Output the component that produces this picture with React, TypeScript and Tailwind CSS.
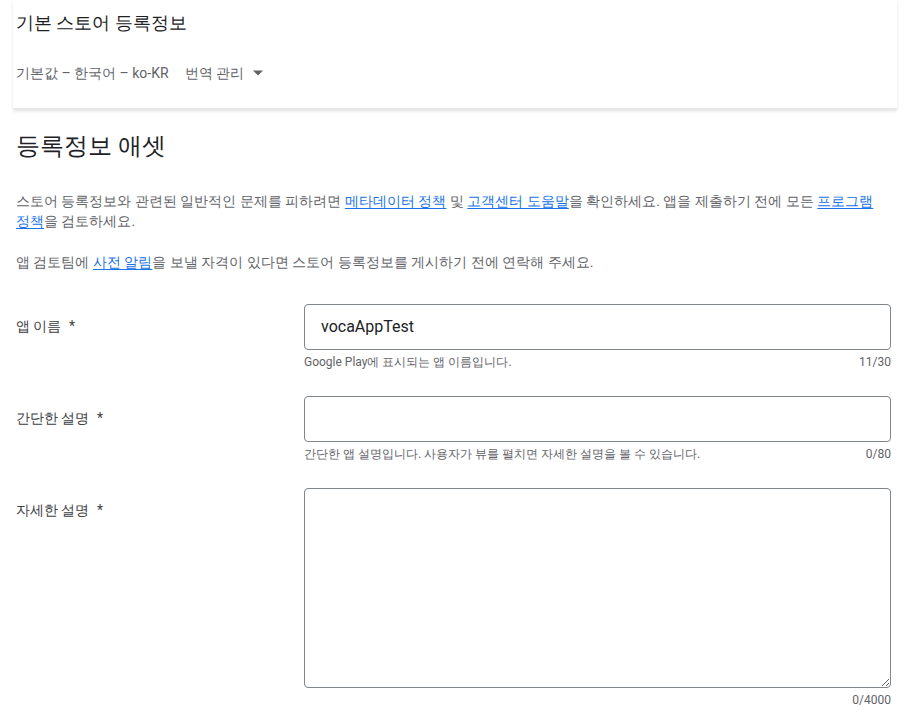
import { ReactNode } from 'react'

function Link({ children }: { children: ReactNode }) {
  return <a className="text-[#1a73e8] underline underline-offset-2">{children}</a>
}

function Field({
  label,
  hint,
  count,
  value,
  tall,
}: {
  label: string
  hint?: string
  count: string
  value?: string
  tall?: boolean
}) {
  return (
    <div className="flex">
      <div className="w-[288px] shrink-0 pt-[12px] text-[14px] leading-[20px] text-[#3c4043]">
        {label} <span className="ml-1">*</span>
      </div>
      <div className="w-[587px]">
        {tall ? (
          <textarea
            className="block w-full h-[200px] rounded-[4px] border border-[#80868b] px-4 py-3 text-[16px] outline-none"
            defaultValue=""
          />
        ) : (
          <div className="h-[46px] rounded-[4px] border border-[#80868b] px-4 flex items-center text-[16px] text-[#202124]">
            {value}
          </div>
        )}
        <div className="flex justify-between mt-[4px] text-[12px] leading-[16px] text-[#5f6368]">
          <span>{hint}</span>
          <span>{count}</span>
        </div>
      </div>
    </div>
  )
}

export default function App() {
  return (
    <div className="bg-white w-[910px] h-[723px] overflow-hidden font-[Roboto,sans-serif]">
      <div className="mx-[13px] shadow-[0_2px_3px_rgba(0,0,0,0.12)] border-b border-[#e8e8e8] pl-[3px] pb-[25px]">
        <div className="pt-[11px] text-[18px] leading-[24px] text-[#202124]">기본 스토어 등록정보</div>
        <div className="mt-[28px] flex items-center text-[14px] leading-[20px] text-[#5f6368]">
          <span>기본값 – 한국어 – ko-KR</span>
          <span className="ml-4">번역 관리</span>
          <svg width="10" height="6" viewBox="0 0 10 5" className="ml-[9px]">
            <path d="M0 0l5 5 5-5z" fill="#5f6368" />
          </svg>
        </div>
      </div>

      <div className="px-4">
        <h1 className="mt-[21px] text-[24px] leading-[32px] text-[#202124]">등록정보 애셋</h1>
        <p className="mt-[29px] w-[878px] break-keep text-[14px] leading-[20px] text-[#5f6368]">
          스토어 등록정보와 관련된 일반적인 문제를 피하려면 <Link>메타데이터 정책</Link> 및{' '}
          <Link>고객센터 도움말</Link>을 확인하세요. 앱을 제출하기 전에 모든 <Link>프로그램 정책</Link>을
          검토하세요.
        </p>
        <p className="mt-[21px] text-[14px] leading-[20px] text-[#5f6368]">
          앱 검토팀에 <Link>사전 알림</Link>을 보낼 자격이 있다면 스토어 등록정보를 게시하기 전에 연락해 주세요.
        </p>

        <div className="mt-[32px] flex flex-col gap-[26px]">
          <Field label="앱 이름" value="vocaAppTest" hint="Google Play에 표시되는 앱 이름입니다." count="11/30" />
          <Field
            label="간단한 설명"
            hint="간단한 앱 설명입니다. 사용자가 뷰를 펼치면 자세한 설명을 볼 수 있습니다."
            count="0/80"
          />
          <Field label="자세한 설명" count="0/4000" tall />
        </div>
      </div>
    </div>
  )
}
